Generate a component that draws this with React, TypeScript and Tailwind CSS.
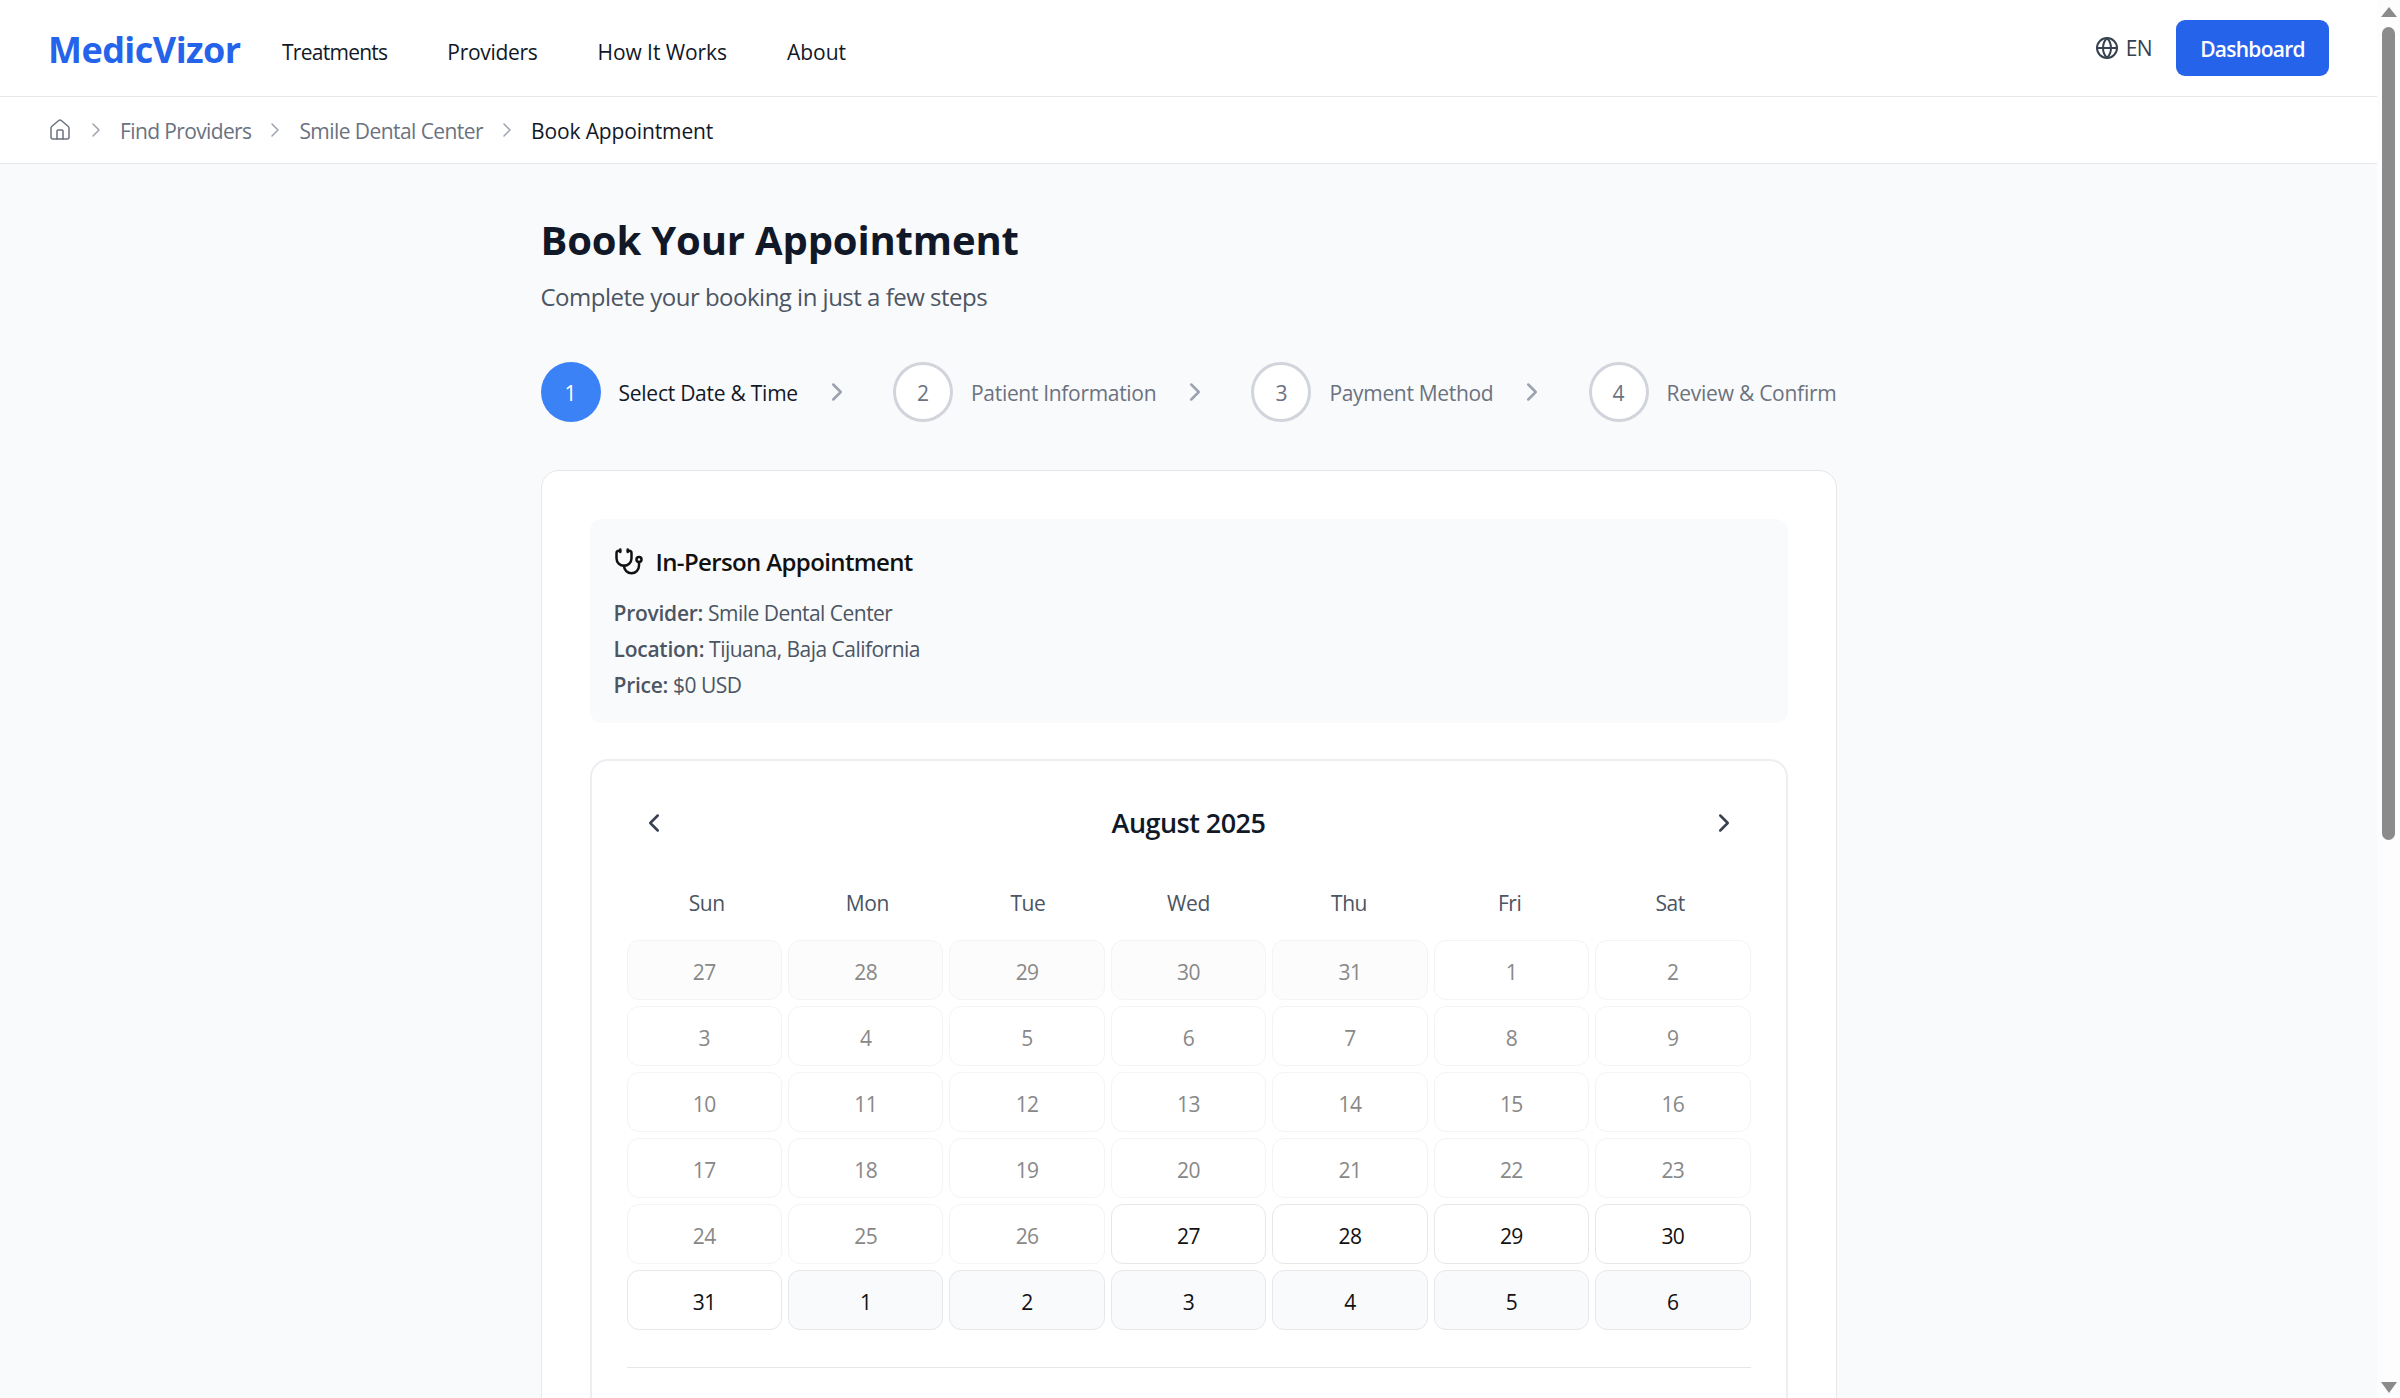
import { ChevronLeft, ChevronRight, Globe, House, Stethoscope } from "lucide-react";

const navLinks = [
  { label: "Treatments", cls: "tracking-[-0.035em]" },
  { label: "Providers", cls: "tracking-[-0.014em]" },
  { label: "How It Works", cls: "tracking-[-0.004em]" },
  { label: "About", cls: "tracking-normal" },
];
const weekdays = ["Sun", "Mon", "Tue", "Wed", "Thu", "Fri", "Sat"];

const steps = [
  { n: 1, label: "Select Date & Time", active: true, cls: "tracking-[-0.012em]" },
  { n: 2, label: "Patient Information", active: false, cls: "tracking-[-0.015em]" },
  { n: 3, label: "Payment Method", active: false, cls: "tracking-[-0.015em]" },
  { n: 4, label: "Review & Confirm", active: false, cls: "tracking-[-0.012em]" },
];

type Day = { d: number; kind: "past" | "disabled" | "open" | "next" };

const allDays: Day[] = [
  ...[27, 28, 29, 30, 31].map((d) => ({ d, kind: "past" as const })),
  ...Array.from({ length: 26 }, (_, i) => ({ d: i + 1, kind: "disabled" as const })),
  ...[27, 28, 29, 30, 31].map((d) => ({ d, kind: "open" as const })),
  ...[1, 2, 3, 4, 5, 6].map((d) => ({ d, kind: "next" as const })),
];

const dayStyle = {
  past: "bg-[#fcfcfc] border-[#f3f4f6] text-[#888888]",
  disabled: "bg-white border-[#f3f4f6] text-[#888888]",
  open: "bg-white border-[#e5e7eb] text-[#111111]",
  next: "bg-[#f9fafb] border-[#e5e7eb] text-[#111111]",
};

function Scrollbar() {
  return (
    <div className="w-[23px] h-full shrink-0 bg-[#fdfdfd] flex flex-col items-center pt-[7px] pb-[5px]">
      <svg width="16" height="10" viewBox="0 0 16 10" className="shrink-0 fill-[#8b8b8b]">
        <path d="M8 0 L16 10 L0 10 Z" />
      </svg>
      <div className="w-[13px] h-[813px] mt-[10px] rounded-full bg-[#8b8b8b]" />
      <div className="flex-1" />
      <svg width="16" height="11" viewBox="0 0 16 11" className="shrink-0 fill-[#8b8b8b]">
        <path d="M0 0 L16 0 L8 11 Z" />
      </svg>
    </div>
  );
}

export default function App() {
  return (
    <div className="flex h-[1398px] overflow-hidden bg-[#f9fafb] font-['Open_Sans',sans-serif] text-[21px]">
      <div className="flex-1 min-w-0 h-full overflow-hidden">
        <header className="h-[97px] bg-white border-b border-[#e5e7eb] px-[48px] flex items-center justify-between">
          <div className="flex items-center">
            <span className="text-[36px] font-bold text-[#2563eb] tracking-[-0.015em] w-[234px] pt-[3px]">MedicVizor</span>
            <nav className="flex gap-[60px] pt-[9px]">
              {navLinks.map((l) => (
                <a key={l.label} className={`font-medium text-[#111827] ${l.cls}`}>{l.label}</a>
              ))}
            </nav>
          </div>
          <div className="flex items-center gap-[24px]">
            <div className="flex items-center gap-[7px] text-[#374151]">
              <Globe className="size-[24px]" strokeWidth={2} />
              <span className="tracking-[-0.03em] pt-[2px]">EN</span>
            </div>
            <button className="h-[56px] w-[153px] pt-[3px] rounded-[9px] bg-[#2563eb] text-white font-semibold tracking-[-0.035em]">Dashboard</button>
          </div>
        </header>

        <div className="h-[67px] bg-white border-b border-[#e5e7eb] pl-[48px] flex items-center gap-[12px]">
          <House className="size-[24px] text-[#6b7280]" strokeWidth={1.5} />
          <ChevronRight className="size-[24px] text-[#9ca3af]" strokeWidth={1.5} />
          <span className="text-[#6b7280] tracking-[-0.03em] pt-[3px]">Find Providers</span>
          <ChevronRight className="size-[24px] text-[#9ca3af]" strokeWidth={1.5} />
          <span className="text-[#6b7280] tracking-[-0.027em] pt-[3px]">Smile Dental Center</span>
          <ChevronRight className="size-[24px] text-[#9ca3af]" strokeWidth={1.5} />
          <span className="text-[#111827] font-medium tracking-[-0.006em] pt-[3px]">Book Appointment</span>
        </div>

        <main className="w-[1296px] mx-auto pt-[46px]">
          <h1 className="text-[40px] leading-[60px] font-bold text-[#111827] tracking-[-0.004em]">Book Your Appointment</h1>
          <p className="text-[24px] leading-[36px] mt-[9px] text-[#4b5563] tracking-[-0.021em]">Complete your booking in just a few steps</p>

          <div className="mt-[47px] flex items-center justify-between">
            {steps.map((s, i) => (
              <div key={s.n} className="flex items-center">
                <div
                  className={
                    s.active
                      ? "size-[60px] pt-[3px] rounded-full bg-[#3b82f6] text-white flex items-center justify-center font-medium"
                      : "size-[60px] pt-[3px] rounded-full bg-white border-[3px] border-[#d1d5db] text-[#6b7280] flex items-center justify-center font-medium"
                  }
                >
                  {s.n}
                </div>
                <span className={`ml-[18px] pt-[3px] font-medium ${s.active ? "text-[#111827]" : "text-[#6b7280]"} ${s.cls}`}>
                  {s.label}
                </span>
                {i < steps.length - 1 && <ChevronRight className="ml-[24px] size-[30px] text-[#9ca3af]" strokeWidth={2} />}
              </div>
            ))}
          </div>

          <section className="mt-[48px] rounded-[18px] border border-[#e5e7eb] bg-white p-[48px]">
            <div className="rounded-[12px] bg-[#f9fafb] p-[24px] pt-[25px] h-[204px]">
              <div className="flex items-center gap-[12px] h-[36px]">
                <Stethoscope className="size-[30px] text-[#111111]" strokeWidth={2} />
                <h3 className="text-[24px] font-semibold text-[#111111] tracking-[-0.026em]">In-Person Appointment</h3>
              </div>
              <div className="mt-[18px] flex flex-col gap-[6px] text-[#4b5563] leading-[30px] tracking-[-0.025em]">
                <p><strong className="font-semibold tracking-[-0.012em]">Provider:</strong> Smile Dental Center</p>
                <p><strong className="font-semibold tracking-[-0.012em]">Location:</strong> Tijuana, Baja California</p>
                <p><strong className="font-semibold tracking-[-0.012em]">Price:</strong> $0 USD</p>
              </div>
            </div>

            <div className="mt-[36px] rounded-[18px] border-2 border-[#eceef1] p-[35px]">
              <div className="flex items-center justify-between">
                <button className="p-[12px] text-[#374151]"><ChevronLeft className="size-[30px]" /></button>
                <h2 className="pt-[1px] text-[27px] font-semibold text-[#111827] tracking-[-0.02em]">August 2025</h2>
                <button className="p-[12px] text-[#374151]"><ChevronRight className="size-[30px]" /></button>
              </div>

              <div className="mt-[38px] grid grid-cols-7">
                {weekdays.map((w) => (
                  <div key={w} className="text-center font-medium text-[#4b5563] leading-[30px] tracking-[-0.02em]">{w}</div>
                ))}
              </div>

              <div className="mt-[22px] grid grid-cols-7 gap-[6px]">
                {allDays.map((c, i) => (
                  <div key={i} className={`h-[60px] rounded-[12px] border flex items-center justify-center pt-[5px] tracking-[-0.03em] ${dayStyle[c.kind]}`}>
                    {c.d}
                  </div>
                ))}
              </div>

              <div className="mt-[37px] border-t border-[#e5e7eb]" />
              <div className="h-[200px]" />
            </div>
          </section>
        </main>
      </div>
      <Scrollbar />
    </div>
  );
}
